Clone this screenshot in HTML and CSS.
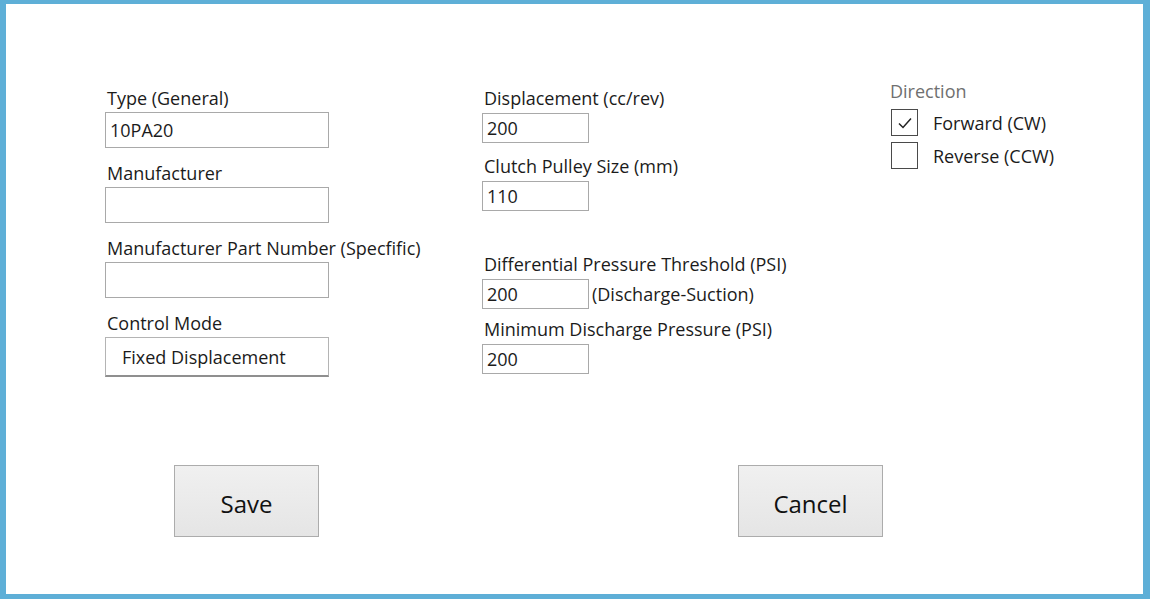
FILE: index.html
```html
<!DOCTYPE html>
<html>
<head>
<meta charset="utf-8">
<link rel="stylesheet" href="styles.css">
</head>
<body>
<div class="frame">
  <div class="form">
    <div class="col col1">
      <div class="field">
        <div class="label">Type (General)</div>
        <div class="input wide">10PA20</div>
      </div>
      <div class="field">
        <div class="label">Manufacturer</div>
        <div class="input wide"></div>
      </div>
      <div class="field">
        <div class="label">Manufacturer Part Number (Specfific)</div>
        <div class="input wide"></div>
      </div>
      <div class="field">
        <div class="label">Control Mode</div>
        <div class="select">Fixed Displacement</div>
      </div>
    </div>
    <div class="col col2">
      <div class="field2 first">
        <div class="label">Displacement (cc/rev)</div>
        <div class="input small">200</div>
      </div>
      <div class="field2">
        <div class="label">Clutch Pulley Size (mm)</div>
        <div class="input small">110</div>
      </div>
      <div class="field2 spaced">
        <div class="label">Differential Pressure Threshold (PSI)</div>
        <div class="inline">
          <div class="input small">200</div>
          <span class="note">(Discharge-Suction)</span>
        </div>
      </div>
      <div class="field2">
        <div class="label">Minimum Discharge Pressure (PSI)</div>
        <div class="input small">200</div>
      </div>
    </div>
    <div class="col col3">
      <div class="group-title">Direction</div>
      <div class="check-row">
        <span class="box">
          <svg width="16" height="16" viewBox="0 0 16 16"><polyline points="2,8.5 6,12.5 14,3.5" fill="none" stroke="#222" stroke-width="1.5"/></svg>
        </span>
        <span class="check-label">Forward (CW)</span>
      </div>
      <div class="check-row">
        <span class="box"></span>
        <span class="check-label">Reverse (CCW)</span>
      </div>
    </div>
  </div>
  <div class="buttons">
    <button class="btn">Save</button>
    <button class="btn">Cancel</button>
  </div>
</div>
</body>
</html>
```

FILE: styles.css
```css
html, body {
  margin: 0;
  padding: 0;
  background: #5eafd7;
}
.frame {
  box-sizing: border-box;
  width: 1150px;
  height: 599px;
  border-style: solid;
  border-color: #5eafd7;
  border-width: 4px 7px 5px 6px;
  background: #ffffff;
  font-family: "Open Sans", "Noto Sans", sans-serif;
  font-size: 18px;
  color: #1b1b1b;
  display: flex;
  flex-direction: column;
}
.form {
  display: flex;
  align-items: flex-start;
  padding-top: 82px;
  padding-left: 99px;
}
.col1 { width: 377px; }
.col2 { width: 408px; }
.field { margin-bottom: 13px; }
.field:last-child { margin-bottom: 0; }
.label {
  height: 24px;
  line-height: 24px;
  padding-left: 2px;
  white-space: nowrap;
  margin-bottom: 2px;
}
.input {
  box-sizing: border-box;
  border: 1px solid #a9a9a9;
  background: #fff;
  padding-left: 4px;
  white-space: nowrap;
}
.input.wide {
  width: 224px;
  height: 36px;
  line-height: 34px;
}
.input.small {
  width: 107px;
  height: 30px;
  line-height: 28px;
}
.select {
  box-sizing: border-box;
  width: 224px;
  height: 40px;
  line-height: 38px;
  border: 1px solid #b4b4b4;
  border-bottom: 2px solid #8f8f8f;
  padding-left: 16px;
  background: #fff;
}
.field2 .label { margin-bottom: 3px; }
.field2 { margin-bottom: 8px; }
.field2.first { margin-bottom: 11px; }
.field2.spaced { margin-top: 41px; }
.field2:last-child { margin-bottom: 0; }
.inline {
  display: flex;
  align-items: center;
  gap: 3px;
}
.note { white-space: nowrap; }
.group-title {
  color: #707070;
  height: 22px;
  line-height: 22px;
  margin-top: -6px;
  margin-bottom: 7px;
}
.check-row {
  display: flex;
  align-items: center;
  height: 27px;
  margin-bottom: 6px;
}
.box {
  box-sizing: border-box;
  width: 27px;
  height: 27px;
  border: 1px solid #4a4a4a;
  display: flex;
  align-items: center;
  justify-content: center;
  margin-left: 1px;
}
.check-label {
  margin-left: 15px;
  white-space: nowrap;
}
.buttons {
  display: flex;
  padding-left: 168px;
  margin-top: 88px;
  gap: 419px;
}
.btn {
  box-sizing: border-box;
  width: 145px;
  height: 72px;
  border: 1px solid #acacac;
  background: linear-gradient(#f0f0f0, #e5e5e5);
  font-family: "Open Sans", "Noto Sans", sans-serif;
  font-size: 24px;
  color: #111;
  padding: 4px 0 0 0;
}
```
